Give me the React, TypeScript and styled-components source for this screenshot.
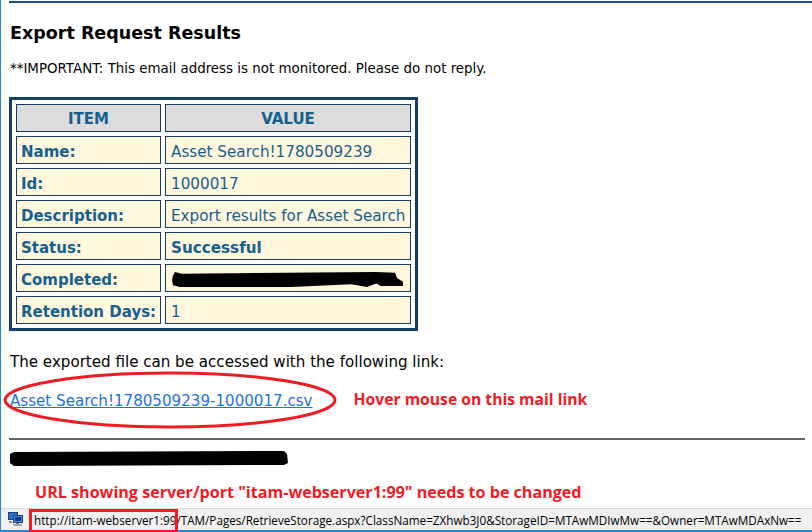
import styled, { createGlobalStyle } from 'styled-components'

const GlobalStyle = createGlobalStyle`
  html, body {
    background: #fff;
    height: 100%;
    margin: 0;
    overflow: hidden;
  }

  #root {
    height: 100%;
  }
`

const rows = [
  { label: 'Name:', value: 'Asset Search!1780509239' },
  { label: 'Id:', value: '1000017' },
  { label: 'Description:', value: 'Export results for Asset Search' },
  { label: 'Status:', value: 'Successful', strong: true },
  { label: 'Completed:', value: '', redacted: true },
  { label: 'Retention Days:', value: '1' },
]

const StatusIcon = () => (
  <StatusGlyph viewBox="0 0 15 15">
    <rect x="0.5" y="0.5" width="9" height="7" fill="#2f6fc4" stroke="#1d3f7a" />
    <rect x="5.5" y="3.5" width="9" height="7" fill="#3f8ae0" stroke="#1d3f7a" />
    <rect x="7" y="5" width="6" height="4" fill="#123a80" />
    <rect x="8" y="11" width="3" height="1" fill="#777" />
    <rect x="5" y="12" width="9" height="2" fill="#a8a8a8" />
    <rect x="1" y="9" width="3" height="2" fill="#8a8a8a" />
  </StatusGlyph>
)

const App: React.FC = () => {
  return (
    <Page>
      <GlobalStyle />
      <Main>
        <TopRule />
        <Title>Export Request Results</Title>
        <Notice>**IMPORTANT: This email address is not monitored. Please do not reply.</Notice>
        <ResultsTable>
          <thead>
            <tr>
              <HeadCell $width={145}>ITEM</HeadCell>
              <HeadCell $width={246}>VALUE</HeadCell>
            </tr>
          </thead>
          <tbody>
            {rows.map((row) => (
              <tr key={row.label}>
                <LabelCell>{row.label}</LabelCell>
                <ValueCell $strong={row.strong}>
                  {row.value}
                  {row.redacted && (
                    <CellScribble viewBox="0 0 232 18" preserveAspectRatio="none">
                      <path d="M1 5 L3 1 L10 3 L205 1 L224 2 L226 8 L232 12 L232 17 L210 17 L205 14 L196 18 L180 15 L120 18 L8 18 L1 16 L0 10 Z" fill="#000" />
                    </CellScribble>
                  )}
                </ValueCell>
              </tr>
            ))}
          </tbody>
        </ResultsTable>
        <AccessText>The exported file can be accessed with the following link:</AccessText>
        <LinkRow>
          <MailLink href="#">Asset Search!1780509239-1000017.csv</MailLink>
          <HoverNote>Hover mouse on this mail link</HoverNote>
          <LinkEllipse viewBox="0 0 334 58">
            <ellipse cx="167" cy="29" rx="165" ry="27" fill="none" stroke="#ed1c24" strokeWidth="3" />
          </LinkEllipse>
        </LinkRow>
        <Divider />
        <SignatureScribble viewBox="0 0 279 15" preserveAspectRatio="none">
          <path d="M1 3 L5 1 L275 0 L278 3 L279 12 L275 14 L5 15 L1 12 Z" fill="#000" />
        </SignatureScribble>
        <UrlNote>URL showing server/port "itam-webserver1:99" needs to be changed</UrlNote>
      </Main>
      <StatusBar>
        <StatusIcon />
        <StatusUrl>
          http://itam-webserver1:99/TAM/Pages/RetrieveStorage.aspx?ClassName=ZXhwb3J0&amp;StorageID=MTAwMDIwMw==&amp;Owner=MTAwMDAxNw==
          <UrlHighlight />
        </StatusUrl>
      </StatusBar>
    </Page>
  )
}

export default App

const Page = styled.div`
  border-bottom: 2px solid #1e88e5;
  border-left: 1px solid #1e88e5;
  box-sizing: border-box;
  display: flex;
  flex-direction: column;
  font-family: "DejaVu Sans", Verdana, sans-serif;
  height: 532px;
  width: 812px;
`

const Main = styled.div`
  display: flex;
  flex: 1;
  flex-direction: column;
  padding: 1px 7px 0 8px;
`

const TopRule = styled.div`
  background: #1f4e79;
  height: 2px;
  margin-right: -7px;
`

const Title = styled.h1`
  color: #000;
  font-size: 17.5px;
  font-weight: 700;
  line-height: 22px;
  margin: 19px 0 0 1px;
`

const Notice = styled.p`
  color: #000;
  font-size: 13.4px;
  line-height: 16px;
  margin: 17px 0 0 1px;
`

const ResultsTable = styled.table`
  border: 3px solid #153e66;
  border-spacing: 4px;
  border-collapse: separate;
  margin-top: 20px;
  table-layout: fixed;
  width: 409px;
`

const HeadCell = styled.th<{ $width: number }>`
  background: #dcdcdc;
  border: 1px solid #153e66;
  box-sizing: border-box;
  color: #15608f;
  font-size: 15px;
  font-weight: 700;
  height: 28px;
  padding: 2px 0 0;
  text-align: center;
  width: ${(p) => p.$width}px;
`

const LabelCell = styled.td`
  background: #fff6dc;
  border: 1px solid #153e66;
  box-sizing: border-box;
  color: #15608f;
  font-size: 15px;
  font-weight: 700;
  height: 28px;
  padding: 3px 0 0 4px;
  white-space: nowrap;
`

const ValueCell = styled.td<{ $strong?: boolean }>`
  background: #fff6dc;
  border: 1px solid #153e66;
  box-sizing: border-box;
  color: #15608f;
  font-size: 15.2px;
  font-weight: ${(p) => (p.$strong ? 700 : 400)};
  height: 28px;
  padding: 3px 0 0 5px;
  position: relative;
  white-space: nowrap;
`

const CellScribble = styled.svg`
  height: 16px;
  left: 6px;
  position: absolute;
  top: 6px;
  width: 231px;
`

const AccessText = styled.p`
  color: #000;
  font-size: 15.1px;
  line-height: 18px;
  margin: 22px 0 0 1px;
`

const LinkRow = styled.div`
  align-items: center;
  display: flex;
  gap: 41px;
  height: 58px;
  margin: 0 0 0 1px;
  position: relative;
`

const MailLink = styled.a`
  color: #1a73d9;
  font-size: 15.1px;
  padding-top: 2px;
  text-decoration: underline;
`

const HoverNote = styled.span`
  color: #ed1c24;
  font-family: "Open Sans", sans-serif;
  font-size: 15.7px;
  font-weight: 700;
  margin-bottom: 2px;
`

const LinkEllipse = styled.svg`
  height: 58px;
  left: -7px;
  pointer-events: none;
  position: absolute;
  top: 0;
  width: 334px;
`

const Divider = styled.div`
  background: #666;
  height: 2px;
  margin: 9px 0 0 0;
`

const SignatureScribble = styled.svg`
  display: block;
  height: 15px;
  margin: 11px 0 0 0;
  width: 279px;
`

const UrlNote = styled.div`
  color: #ed1c24;
  font-family: "Open Sans", sans-serif;
  font-size: 16.1px;
  font-weight: 700;
  line-height: 22px;
  margin: 15px 0 0 26px;
`

const StatusBar = styled.div`
  align-items: center;
  background: #f0f0f0;
  border-top: 1px solid #d9d9d9;
  box-sizing: border-box;
  display: flex;
  flex: none;
  gap: 11px;
  height: 22px;
  padding-left: 7px;
`

const StatusGlyph = styled.svg`
  flex: none;
  height: 15px;
  width: 15px;
`

const StatusUrl = styled.div`
  color: #000;
  font-family: "Open Sans", sans-serif;
  font-size: 11.7px;
  position: relative;
  white-space: nowrap;
`

const UrlHighlight = styled.span`
  border: 3px solid #ed1c24;
  box-sizing: border-box;
  height: 24px;
  left: -5px;
  position: absolute;
  top: -3px;
  width: 149px;
`
